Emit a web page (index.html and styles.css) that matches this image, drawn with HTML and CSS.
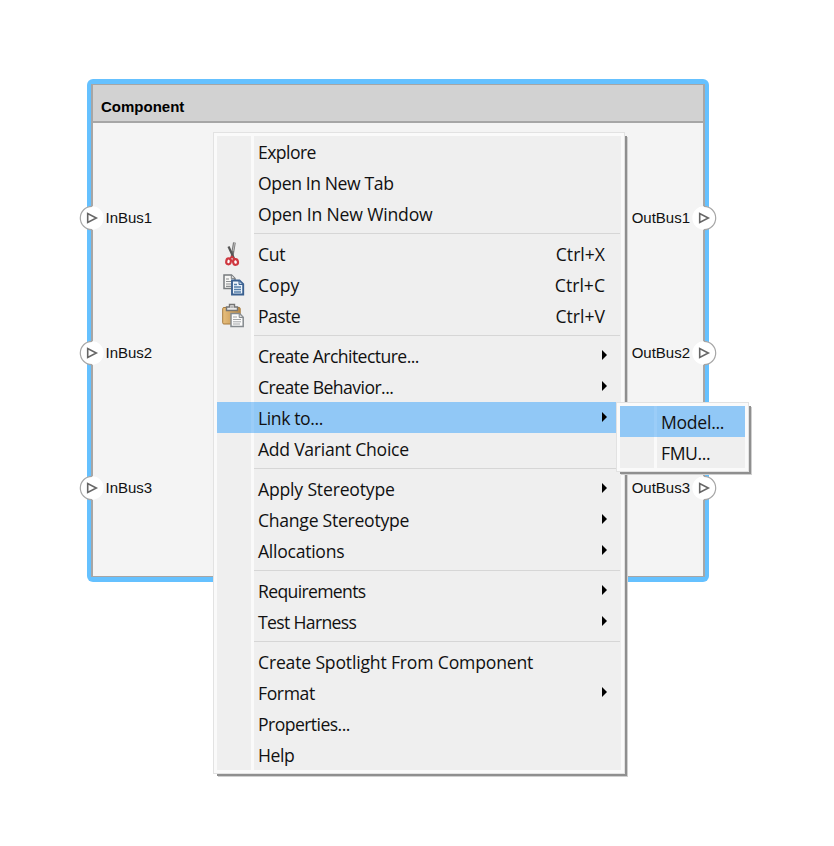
FILE: index.html
```
<!DOCTYPE html>
<html lang="en">
<head>
<meta charset="utf-8">
<title>Component</title>
<link rel="stylesheet" href="styles.css">
</head>
<body>
<svg class="defs" width="0" height="0">
  <symbol id="port-in" viewBox="0 0 26 26"><circle cx="13" cy="13" r="11.7" fill="#fff"/><path d="M13 1.3A11.7 11.7 0 0 0 13 24.7" fill="none" stroke="#a6a6a6" stroke-width="1.2"/><path d="M8.7 8.5v9l8.6-4.5z" fill="#fff" stroke="#666" stroke-width="1.6"/></symbol>
  <symbol id="port-out" viewBox="0 0 26 26"><circle cx="13" cy="13" r="11.7" fill="#fff"/><path d="M13 1.3A11.7 11.7 0 0 1 13 24.7" fill="none" stroke="#a6a6a6" stroke-width="1.2"/><path d="M8.7 8.5v9l8.6-4.5z" fill="#fff" stroke="#666" stroke-width="1.6"/></symbol>
</svg>
<main class="canvas">
  <section class="component">
    <div class="component-box">
      <h1 class="component-title">Component</h1>
      <div class="ports">
        <div class="side in">
          <div class="port"><svg><use href="#port-in"/></svg><span>InBus1</span></div>
          <div class="port"><svg><use href="#port-in"/></svg><span>InBus2</span></div>
          <div class="port"><svg><use href="#port-in"/></svg><span>InBus3</span></div>
        </div>
        <div class="side out">
          <div class="port"><span>OutBus1</span><svg><use href="#port-out"/></svg></div>
          <div class="port"><span>OutBus2</span><svg><use href="#port-out"/></svg></div>
          <div class="port"><span>OutBus3</span><svg><use href="#port-out"/></svg></div>
        </div>
      </div>
    </div>
  </section>

  <nav class="menu main-menu">
    <div class="row"><i></i><span class="tight-4">Explore</span></div>
    <div class="row"><i></i><span class="tight-3">Open In New Tab</span></div>
    <div class="row"><i></i><span class="tight-1">Open In New Window</span></div>
    <hr>
    <div class="row"><i><svg width="24" height="26" viewBox="0 0 24 26"><path d="M13.4 1.5L11 16" stroke="#777" stroke-width="2.8"/><path d="M13.6 1.5L12 10" stroke="#bbb" stroke-width="1"/><path d="M7.5 5.5L13 17.5" stroke="#555" stroke-width="2.2"/><ellipse cx="7.6" cy="20.4" rx="2.3" ry="2.9" fill="#fff" stroke="#cf3840" stroke-width="2.2" transform="rotate(12 7.6 20.2)"/><ellipse cx="14.5" cy="21" rx="2.4" ry="2.9" fill="#fff" stroke="#cf3840" stroke-width="2.2" transform="rotate(-12 14.3 20.8)"/><path d="M9 17.5l2-2 2.4 2.5" stroke="#cf3840" stroke-width="1.8" fill="none"/></svg></i><span class="tight-2">Cut</span><kbd>Ctrl+X</kbd></div>
    <div class="row"><i><svg width="24" height="26" viewBox="0 0 24 26"><path d="M3 3h7.5l3.5 3.5v10H3z" fill="#f7f7f5" stroke="#777b7d" stroke-width="1.5"/><path d="M10.3 3v3.7H14" fill="#ddd" stroke="#777b7d"/><path d="M5 7h3M5 9.5h6M5 12h5M5 14.3h5" stroke="#8b8e90" stroke-width="1.2"/><path d="M11 8.5h7.5l3.7 3.7V22.5H11z" fill="#edf4fb" stroke="#3a6090" stroke-width="1.9"/><path d="M18 8.5v4h4z" fill="#bcd2e8" stroke="#3a6090"/><path d="M13 12.5h3M13 15h7M13 17.5h7M13 20h7" stroke="#557faa" stroke-width="1.3"/></svg></i><span>Copy</span><kbd>Ctrl+C</kbd></div>
    <div class="row"><i><svg width="24" height="26" viewBox="0 0 24 26"><defs><linearGradient id="board"><stop offset="0" stop-color="#e8bf7d"/><stop offset="1" stop-color="#bb8b47"/></linearGradient></defs><rect x="1.7" y="4.5" width="17.5" height="16.5" rx="1.2" fill="url(#board)" stroke="#a77b3d"/><path d="M5.5 7.5V4h3V1.5h5V4h3v3.5z" fill="#e8e8e8" stroke="#747474" stroke-width="1.4"/><path d="M9.5 4h3" stroke="#888"/><path d="M10 10.5h8.5l3.7 3.7v9.3H10z" fill="#fafafa" stroke="#858a8e" stroke-width="1.5"/><path d="M18.2 10.5v4h4z" fill="#ddd" stroke="#858a8e"/><path d="M12 14h4M12 16.5h8M12 18.8h8M12 21h7" stroke="#a3a6a8"/></svg></i><span class="tight-4">Paste</span><kbd>Ctrl+V</kbd></div>
    <hr>
    <div class="row sub"><i></i><span class="tight-4">Create Architecture...</span></div>
    <div class="row sub"><i></i><span class="tight-4">Create Behavior...</span></div>
    <div class="row sub active"><i></i><span class="tight-3">Link to...</span></div>
    <div class="row"><i></i><span class="tight-2">Add Variant Choice</span></div>
    <hr>
    <div class="row sub"><i></i><span class="tight-1">Apply Stereotype</span></div>
    <div class="row sub"><i></i><span class="tight-2">Change Stereotype</span></div>
    <div class="row sub"><i></i><span class="tight-2">Allocations</span></div>
    <hr>
    <div class="row sub"><i></i><span class="tight-5">Requirements</span></div>
    <div class="row sub"><i></i><span class="tight-5">Test Harness</span></div>
    <hr>
    <div class="row"><i></i><span class="tight-1">Create Spotlight From Component</span></div>
    <div class="row sub"><i></i><span class="tight-3">Format</span></div>
    <div class="row"><i></i><span class="tight-4">Properties...</span></div>
    <div class="row"><i></i><span class="tight-3">Help</span></div>
  </nav>

  <nav class="menu submenu">
    <div class="row active"><i></i><span class="tight-2">Model...</span></div>
    <div class="row"><i></i><span class="tight-3">FMU...</span></div>
  </nav>
</main>
</body>
</html>
```
FILE: styles.css
```
* { box-sizing: border-box; }
body { margin: 0; background: #fff; color: #111; }
.defs { display: block; }
.canvas { position: relative; width: 834px; height: 846px; overflow: hidden; }

.component {
  position: absolute; left: 87px; top: 79px; width: 622px; height: 503px;
  padding: 5px 4px 5px 4px; background: #65c1ff; border-radius: 6px;
  font-family: "Liberation Sans", Arial, sans-serif;
}
.component-box {
  height: 100%; background: #f4f4f4;
  border: solid #a6a6a6; border-width: 1px 2px 1px 2px;
  display: flex; flex-direction: column;
}
.component-title {
  margin: 0; height: 38px; padding-left: 8px; flex: none;
  font-size: 15px; line-height: 44px; font-weight: bold; color: #000;
  background: #d2d2d2; border-bottom: 2px solid #a6a6a6;
}
.ports { display: flex; justify-content: space-between; padding-top: 82px; margin: 0 -14px; }
.side { display: flex; flex-direction: column; gap: 109px; }
.port { display: flex; align-items: center; height: 26px; font-size: 15px; line-height: 26px; color: #111; }
.port svg { width: 26px; height: 26px; }
.in .port svg { margin-right: 0.5px; }
.out .port svg { margin-left: 1px; }

/* The shadow falls down and to the right, starting a few pixels in. */
.menu {
  border: 1px solid #e2e2e2; padding: 3px; background: #fafafa;
  font-family: "Open Sans", "Noto Sans", sans-serif; font-size: 17.6px;
  box-shadow: 3px 3px 0 -1px #8f8f8f, 4px 4px 0 -1px #d0d0d0;
}
.main-menu { position: absolute; left: 213px; top: 132px; width: 412px; height: 642px; }
.submenu { position: absolute; left: 616px; top: 402px; width: 133px; height: 70px; }
.row {
  height: 31px; display: flex; line-height: 33px; white-space: nowrap;
  background: linear-gradient(to right, #efefef 34px, #fafafa 34px, #fafafa 37px, #efefef 37px);
}
.row i { width: 41px; flex: none; }
.row i svg { display: block; margin: 3px 0 0 4px; }
.row kbd { margin-left: auto; margin-right: 16px; font: inherit; line-height: 33px; }
.row.active { background: linear-gradient(to right, #91c8f6 34px, #9bcdf8 34px, #9bcdf8 37px, #91c8f6 37px); }
.row.sub::after {
  content: ""; margin: 10px 14px 0 auto; width: 5px; height: 10px;
  background: #000; clip-path: polygon(0 0, 100% 50%, 0 100%);
}
.tight-1 { letter-spacing: -0.18px; }
.tight-2 { letter-spacing: -0.27px; }
.tight-3 { letter-spacing: -0.4px; }
.tight-4 { letter-spacing: -0.56px; }
.tight-5 { letter-spacing: -0.66px; }
.menu hr {
  height: 9px; margin: 0; border: 0;
  background: linear-gradient(#d6d6d6, #d6d6d6) 37px 4px / 366px 1px no-repeat,
    linear-gradient(to right, #efefef 34px, #fafafa 34px, #fafafa 37px, #efefef 37px);
}
```
